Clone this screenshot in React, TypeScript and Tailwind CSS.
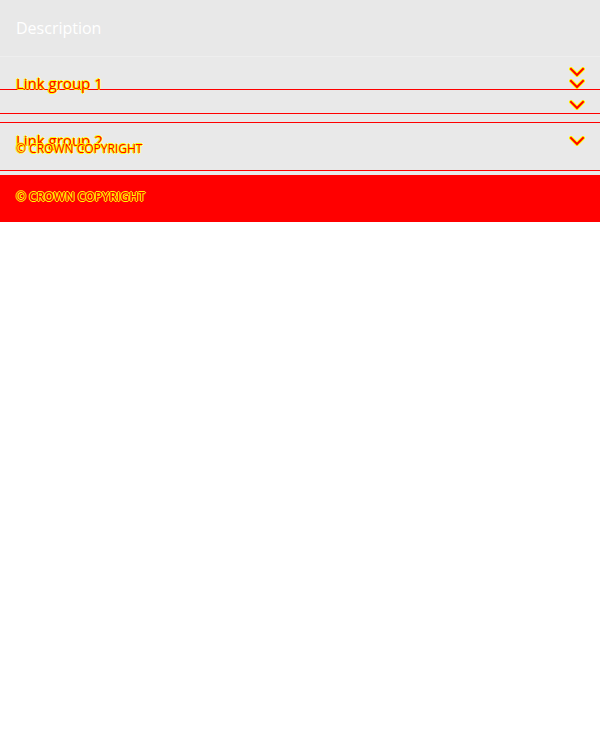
const glitch = 'text-[#ff0000] [text-shadow:1px_0_0_#ffff00,-1px_0_0_#ffff00,0_1px_0_#ffff00,0_-1px_0_#ffff00]';

function Chevron() {
  return (
    <svg width="16" height="10" viewBox="0 0 16 10" className="block">
      <path d="M2 2 L8 8 L14 2" fill="none" stroke="#ffff00" strokeWidth={4} strokeLinecap="square" />
      <path d="M2 2 L8 8 L14 2" fill="none" stroke="#ff0000" strokeWidth={2} strokeLinecap="square" />
    </svg>
  );
}

function Rule() {
  return <div className="h-px bg-[#ff0000]" />;
}

export default function App() {
  return (
    <div className="w-[600px] font-['Open_Sans',sans-serif] bg-white min-h-[750px]">
      <div className="h-[57px] bg-[#e8e8e8] flex items-center px-4 text-white text-base border-b border-[#eeeeee]">
        Description
      </div>

      <div className="bg-[#e9e9e9]">
        {/* link group 1 header, spills over the rule below */}
        <div className="h-8 flex justify-between pl-4 pr-[15px]">
          <span className={`mt-[16px] h-5 text-[15px] leading-5 ${glitch}`}>Link group 1</span>
          <div className="mt-[10px] flex flex-col gap-[2px]">
            <Chevron />
            <Chevron />
          </div>
        </div>
        <Rule />
        <div className="h-[23px] flex justify-end pr-[15px] pt-[10px]">
          <Chevron />
        </div>
        <Rule />
        <div className="h-2" />
        <Rule />
        <div className="h-[47px] flex justify-between pl-4 pr-[15px]">
          <div className="flex flex-col pt-[7px]">
            <span className={`h-5 text-[15px] leading-5 ${glitch}`}>Link group 2</span>
            <span className={`-mt-[9px] text-xs leading-4 uppercase ${glitch}`}>© Crown copyright</span>
          </div>
          <div className="pt-[13px]">
            <Chevron />
          </div>
        </div>
        <Rule />
        <div className="h-1" />
      </div>

      <div className="h-[47px] bg-[#ff0000] flex items-start px-4 pt-[14px]">
        <span className={`text-xs leading-4 font-semibold uppercase ${glitch}`}>© Crown copyright</span>
      </div>
    </div>
  );
}
